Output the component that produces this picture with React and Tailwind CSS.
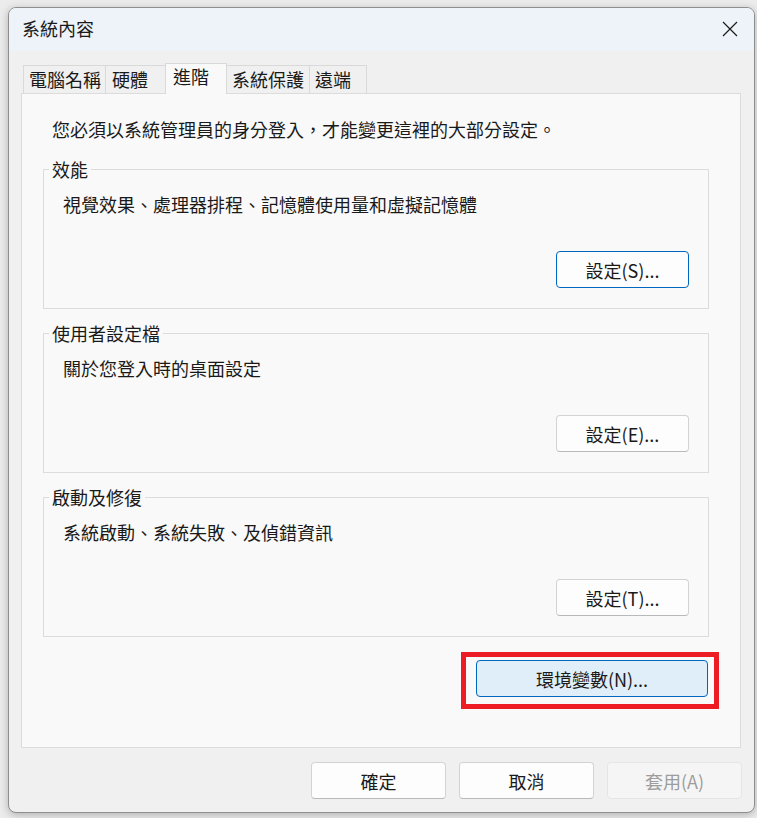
export default function App() {
  const tabBase =
    "flex items-center text-[18px] leading-[24px] border-[#d9d9d9] bg-[#f0f0f0] h-[28px] mb-[1px] pb-[1px]";
  const btnBase =
    "h-[37px] rounded-[4px] border flex items-center justify-center text-[18px] leading-[24px]";
  const normalBtn = "bg-[#fdfdfd] border-[#d3d3d3] border-b-[#b9b9b9] text-[#1a1a1a]";

  const Group = ({ title, desc, btn, focused }) => (
    <fieldset className="m-0 min-w-0 border border-[#dcdcdc] p-0">
      <legend className="ml-[5px] px-[3px] text-[18px] leading-[24px]">{title}</legend>
      <div className="pl-[19px] pr-[19px] pb-[20px]">
        <div className="mt-[11px] text-[18px] leading-[24px]">{desc}</div>
        <div className="mt-[35px] flex justify-end">
          <button
            className={
              focused
                ? `${btnBase} w-[133px] bg-[#fdfdfd] border-[#0067c0] text-[#1a1a1a]`
                : `${btnBase} w-[133px] ${normalBtn}`
            }
          >
            {btn}
          </button>
        </div>
      </div>
    </fieldset>
  );

  return (
    <div className="w-[757px] h-[818px] overflow-hidden bg-[#ececec] pl-[8px] pt-[7px] font-['Noto_Sans_CJK_TC','Noto_Sans_CJK_SC',sans-serif] text-[#1a1a1a]">
      <div className="w-[747px] overflow-hidden rounded-[8px] border border-[#8e8e8e] bg-[#f0f0f0] shadow-[0_2px_8px_rgba(0,0,0,0.25)]">
        {/* Title bar */}
        <div className="flex h-[43px] items-center justify-between bg-[#eef3f9] pl-[13px] pr-[16px]">
          <span className="mb-[4px] text-[18px] leading-[24px]">系統內容</span>
          <svg width="16" height="16" viewBox="0 0 16 16" className="mb-[2px]">
            <path d="M1 1 L15 15 M15 1 L1 15" stroke="#1a1a1a" strokeWidth="1.2" fill="none" />
          </svg>
        </div>

        {/* Body */}
        <div className="pt-[12px] pl-[12px] pr-[12px]">
          {/* Tabs */}
          <div className="relative z-10 -mb-[1px] ml-[2px] flex h-[31px] items-end">
            <div className={`${tabBase} w-[82px] border-l border-t pl-[5px]`}>電腦名稱</div>
            <div className={`${tabBase} w-[60px] border-l border-t pl-[6px]`}>硬體</div>
            <div className="flex h-[31px] w-[62px] items-center border-l border-r border-t border-[#d9d9d9] bg-[#f9f9f9] pb-[6px] pl-[7px] text-[18px] leading-[24px]">
              進階
            </div>
            <div className={`${tabBase} w-[82px] border-t pl-[5px]`}>系統保護</div>
            <div className={`${tabBase} w-[58px] border-l border-r border-t pl-[5px]`}>遠端</div>
          </div>

          {/* Panel */}
          <div className="w-[720px] border border-[#dcdcdc] bg-[#f9f9f9] pt-[23px] pl-[21px] pr-[31px] pb-[50px]">
            <div className="ml-[9px] text-[18px] leading-[24px]">
              您必須以系統管理員的身分登入，才能變更這裡的大部分設定。
            </div>
            <div className="mt-[16px] flex flex-col gap-[12px]">
              <Group
                title="效能"
                desc="視覺效果、處理器排程、記憶體使用量和虛擬記憶體"
                btn="設定(S)..."
                focused
              />
              <Group title="使用者設定檔" desc="關於您登入時的桌面設定" btn="設定(E)..." />
              <Group title="啟動及修復" desc="系統啟動、系統失敗、及偵錯資訊" btn="設定(T)..." />
            </div>
            <div className="mt-[23px] flex justify-end pr-[1px]">
              <div className="relative">
                <button className={`${btnBase} w-[232px] border-[#0067c0] bg-[#e0eef9] text-[#1a1a1a]`}>
                  環境變數(N)...
                </button>
                <div className="absolute left-[-15px] top-[-8px] h-[57px] w-[258px] border-[5px] border-[#ed1c24]" />
              </div>
            </div>
          </div>

          {/* Bottom buttons */}
          <div className="mt-[14px] flex justify-end gap-[13px] pb-[13px]">
            <button className={`${btnBase} w-[135px] ${normalBtn}`}>確定</button>
            <button className={`${btnBase} w-[135px] ${normalBtn}`}>取消</button>
            <button className={`${btnBase} w-[135px] border-[#e5e5e5] bg-[#f5f5f5] text-[#9d9d9d]`}>
              套用(A)
            </button>
          </div>
        </div>
      </div>
    </div>
  );
}
